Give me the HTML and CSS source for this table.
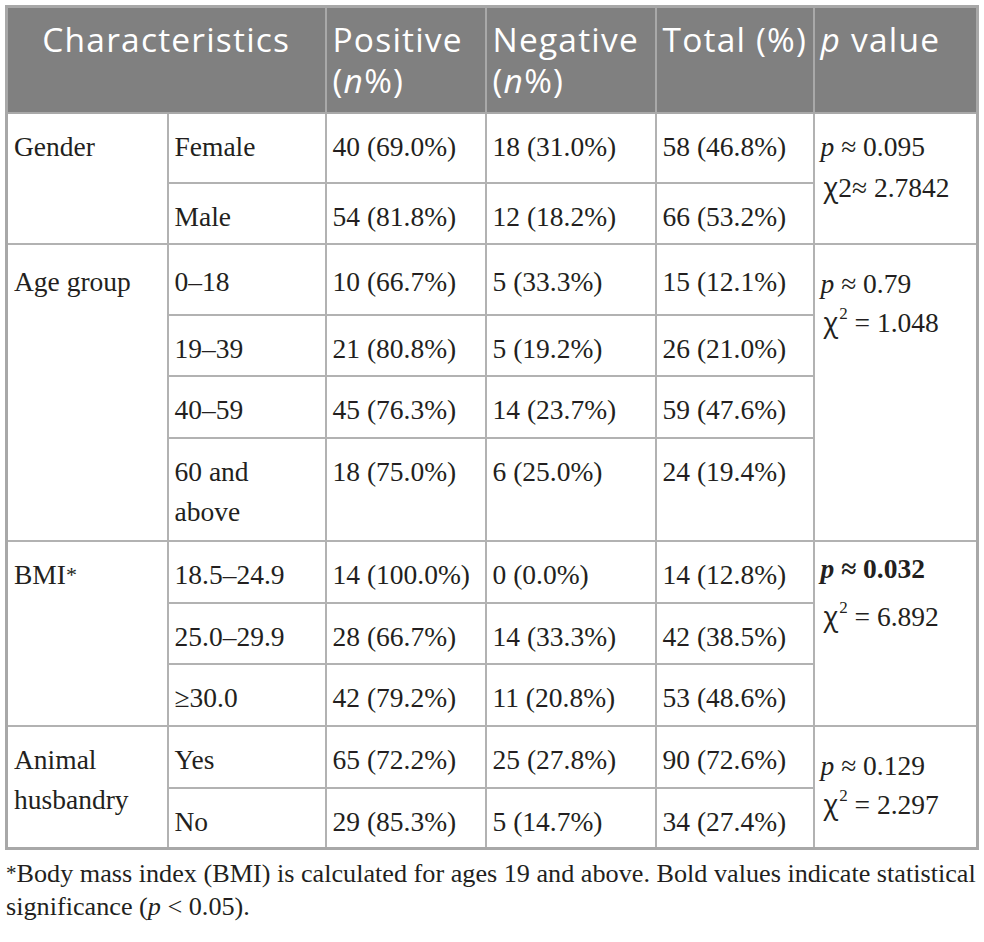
FILE: index.html
```html
<!DOCTYPE html>
<html lang="en">
<head>
<meta charset="utf-8">
<title>Table</title>
<link rel="stylesheet" href="styles.css">
</head>
<body>
<div class="page">
  <table class="data">
    <colgroup>
      <col class="c1"><col class="c2"><col class="c3"><col class="c4"><col class="c5"><col class="c6">
    </colgroup>
    <thead>
      <tr class="head-row">
        <th colspan="2" class="center">Characteristics</th>
        <th>Positive<br>(<i>n</i>%)</th>
        <th>Negative<br>(<i>n</i>%)</th>
        <th>Total (%)</th>
        <th><i>p</i> value</th>
      </tr>
    </thead>
    <tbody>
      <tr class="r70">
        <td rowspan="2">Gender</td>
        <td>Female</td>
        <td>40 (69.0%)</td>
        <td>18 (31.0%)</td>
        <td>58 (46.8%)</td>
        <td rowspan="2" class="pv pv-gender">
          <div><i>p</i> ≈ 0.095</div>
          <div class="chi"><span class="chi-g">χ</span>2≈ 2.7842</div>
        </td>
      </tr>
      <tr class="r61">
        <td>Male</td>
        <td>54 (81.8%)</td>
        <td>12 (18.2%)</td>
        <td>66 (53.2%)</td>
      </tr>

      <tr class="r71 first-age">
        <td rowspan="4">Age group</td>
        <td>0–18</td>
        <td>10 (66.7%)</td>
        <td>5 (33.3%)</td>
        <td>15 (12.1%)</td>
        <td rowspan="4" class="pv pv-age">
          <div><i>p</i> ≈ 0.79</div>
          <div class="chi chi-tight"><span class="chi-g">χ</span><sup>2</sup> = 1.048</div>
        </td>
      </tr>
      <tr class="r61">
        <td>19–39</td>
        <td>21 (80.8%)</td>
        <td>5 (19.2%)</td>
        <td>26 (21.0%)</td>
      </tr>
      <tr class="r62">
        <td>40–59</td>
        <td>45 (76.3%)</td>
        <td>14 (23.7%)</td>
        <td>59 (47.6%)</td>
      </tr>
      <tr class="r103">
        <td>60 and<br>above</td>
        <td>18 (75.0%)</td>
        <td>6 (25.0%)</td>
        <td>24 (19.4%)</td>
      </tr>

      <tr class="r62">
        <td rowspan="3">BMI<span class="ast">*</span></td>
        <td>18.5–24.9</td>
        <td>14 (100.0%)</td>
        <td>0 (0.0%)</td>
        <td>14 (12.8%)</td>
        <td rowspan="3" class="pv pv-bmi">
          <div class="sig"><i>p</i> ≈ 0.032</div>
          <div class="chi chi-loose"><span class="chi-g">χ</span><sup>2</sup> = 6.892</div>
        </td>
      </tr>
      <tr class="r61">
        <td>25.0–29.9</td>
        <td>28 (66.7%)</td>
        <td>14 (33.3%)</td>
        <td>42 (38.5%)</td>
      </tr>
      <tr class="r62">
        <td>≥30.0</td>
        <td>42 (79.2%)</td>
        <td>11 (20.8%)</td>
        <td>53 (48.6%)</td>
      </tr>

      <tr class="r62">
        <td rowspan="2">Animal husbandry</td>
        <td>Yes</td>
        <td>65 (72.2%)</td>
        <td>25 (27.8%)</td>
        <td>90 (72.6%)</td>
        <td rowspan="2" class="pv pv-animal">
          <div><i>p</i> ≈ 0.129</div>
          <div class="chi chi-tight"><span class="chi-g">χ</span><sup>2</sup> = 2.297</div>
        </td>
      </tr>
      <tr class="r61">
        <td>No</td>
        <td>29 (85.3%)</td>
        <td>5 (14.7%)</td>
        <td>34 (27.4%)</td>
      </tr>
    </tbody>
  </table>
  <p class="note"><span class="ast">*</span>Body mass index (BMI) is calculated for ages 19 and above. Bold values indicate statistical<br>significance (<i>p</i> &lt; 0.05).</p>
</div>
</body>
</html>
```

FILE: styles.css
```css
body {
  margin: 0;
  background: #ffffff;
}

.page {
  padding: 5px 0 0 5px;
}

.data {
  border-collapse: collapse;
  table-layout: fixed;
  width: 971px;
  font-family: "Liberation Serif", "Times New Roman", serif;
  font-size: 27.5px;
  line-height: 40px;
  color: #231f20;
  border: 3px solid #a8a8a8;
}

.c1 { width: 161px; }
.c2 { width: 158px; }
.c3 { width: 160px; }
.c4 { width: 170px; }
.c5 { width: 158px; }
.c6 { width: 164px; }

.data th,
.data td {
  border: 2px solid #b2b2b2;
}

.data th {
  background: #808080;
  color: #ffffff;
  font-family: "Open Sans", "DejaVu Sans", sans-serif;
  font-weight: 400;
  font-size: 33.5px;
  line-height: 41px;
  letter-spacing: 1.2px;
  text-align: left;
  vertical-align: top;
  padding: 11px 2px 0 6px;
  white-space: nowrap;
  border-color: #a9a9a9;
}

.data th.center {
  text-align: center;
  padding-left: 0;
  padding-right: 0;
}

.head-row { height: 106px; }
.r61 { height: 61px; }
.r62 { height: 62px; }
.r70 { height: 70px; }
.r71 { height: 71px; }
.r103 { height: 103px; }

.data td {
  vertical-align: top;
  text-align: left;
  padding: 13px 4px 0 6px;
}

.data tr.first-age td {
  padding-top: 17px;
}

.data td.pv-gender { padding-top: 13px; }
.data tr.first-age td.pv-age { padding-top: 19px; }
.data td.pv-bmi { padding-top: 7px; }
.data td.pv-animal { padding-top: 19px; }

.chi {
  padding-left: 3px;
}

.chi-tight { margin-top: -2px; }
.chi-loose { margin-top: 7px; }

.chi-g {
  font-family: "Open Sans", "DejaVu Sans", sans-serif;
  font-size: 27px;
}

.chi sup {
  font-size: 17px;
  line-height: 0;
  vertical-align: 0;
  position: relative;
  top: -13px;
  margin-left: 1px;
}

.sig {
  font-weight: 700;
}

.ast {
  font-size: 22px;
  position: relative;
  top: -2px;
}

.note {
  margin: 8px 0 0 1px;
  font-family: "Liberation Serif", "Times New Roman", serif;
  font-size: 26.2px;
  line-height: 32px;
  color: #231f20;
  white-space: nowrap;
}

.note .ast {
  font-size: 21px;
}
```
